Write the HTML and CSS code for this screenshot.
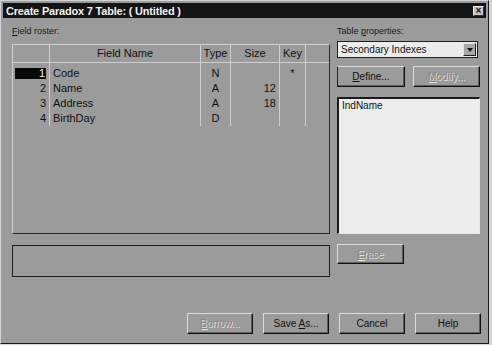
FILE: index.html
```html
<!DOCTYPE html>
<html>

<head>
<link rel="stylesheet" href="styles.css">
</head>

<body>
  <div class="dialog">
    <div class="titlebar">
      <span class="title">Create Paradox 7 Table: ( Untitled )</span>
      <span class="closebox">&#215;</span>
    </div>

    <div class="client">
      <div class="leftside">
        <div class="label"><u>F</u>ield roster:</div>
        <div class="roster">
          <div class="rosterrow head">
            <div class="cell num"></div>
            <div class="cell name center">Field Name</div>
            <div class="cell type">Type</div>
            <div class="cell size center">Size</div>
            <div class="cell key">Key</div>
            <div class="cell rest"></div>
          </div>
          <div class="rosterrow first">
            <div class="cell num"><span class="current">1</span></div>
            <div class="cell name">Code</div>
            <div class="cell type">N</div>
            <div class="cell size"></div>
            <div class="cell key">*</div>
            <div class="cell rest"></div>
          </div>
          <div class="rosterrow">
            <div class="cell num">2</div>
            <div class="cell name">Name</div>
            <div class="cell type">A</div>
            <div class="cell size">12</div>
            <div class="cell key"></div>
            <div class="cell rest"></div>
          </div>
          <div class="rosterrow">
            <div class="cell num">3</div>
            <div class="cell name">Address</div>
            <div class="cell type">A</div>
            <div class="cell size">18</div>
            <div class="cell key"></div>
            <div class="cell rest"></div>
          </div>
          <div class="rosterrow">
            <div class="cell num">4</div>
            <div class="cell name">BirthDay</div>
            <div class="cell type">D</div>
            <div class="cell size"></div>
            <div class="cell key"></div>
            <div class="cell rest"></div>
          </div>
        </div>
        <div class="messagebox"></div>
      </div>

      <div class="rightside">
        <div class="label">Table <u>p</u>roperties:</div>
        <div class="combo">
          <span class="combotext">Secondary Indexes</span>
          <span class="dropbutton"><span class="arrow"></span></span>
        </div>
        <div class="buttonrow">
          <span class="btn define"><span><u>D</u>efine...</span></span>
          <span class="btn modify disabled"><span><u>M</u>odify...</span></span>
        </div>
        <div class="indexlist">
          <div class="listitem">IndName</div>
        </div>
        <span class="btn erase disabled"><span><u>E</u>rase</span></span>
      </div>
    </div>

    <div class="footer">
      <span class="btn disabled"><span><u>B</u>orrow...</span></span>
      <span class="btn"><span>Save <u>A</u>s...</span></span>
      <span class="btn"><span>Cancel</span></span>
      <span class="btn"><span>Help</span></span>
    </div>
  </div>
</body>
</html>
```

FILE: styles.css
```css
/* whole page: the paper behind the dialog */
body {
  margin: 0;
  background: #d6d6d6;
  font-family: "Liberation Sans", Arial, sans-serif;
  color: #111;
}

* {
  box-sizing: border-box;
}

/* the dialog window with its 3d frame */
.dialog {
  width: 489px;
  height: 344px;
  background: #9b9b9b;
  border: 1px solid #1a1a1a;
  border-top-color: #d4d4d4;
  border-left-color: #d4d4d4;
  padding: 2px;
  display: flex;
  flex-direction: column;
}

/* title bar */
.titlebar {
  height: 15px;
  background: #141414;
  display: flex;
  align-items: center;
  justify-content: space-between;
  padding: 0 2px 0 3px;
}

.title {
  color: #f2f2f2;
  font-weight: bold;
  font-size: 11px;
  letter-spacing: -0.2px;
}

.closebox {
  width: 11px;
  height: 10px;
  background: #c4c4c4;
  border: 1px solid #333;
  border-top-color: #eee;
  border-left-color: #eee;
  color: #111;
  font-size: 10px;
  font-weight: bold;
  line-height: 7px;
  text-align: center;
}

/* two columns under the title */
.client {
  display: flex;
  gap: 7px;
  padding-left: 9px;
}

.leftside {
  width: 318px;
  display: flex;
  flex-direction: column;
}

.rightside {
  width: 143px;
  display: flex;
  flex-direction: column;
}

.label {
  font-size: 9px;
  line-height: 12px;
  margin: 7px 0;
  color: #1a1a1a;
}

.rightside .label {
  margin-bottom: 4px;
}

/* field roster grid */
.roster {
  height: 190px;
  border: 1px solid #2a2a2a;
  border-top-color: #cfcfcf;
  border-left-color: #cfcfcf;
  font-size: 11px;
}

.rosterrow {
  display: flex;
  height: 15px;
  line-height: 15px;
}

.rosterrow.head {
  height: 18px;
  line-height: 17px;
  border-bottom: 1px solid #cfcfcf;
}

.rosterrow.first {
  height: 18px;
}

.rosterrow.first .cell {
  padding-top: 3px;
}

.cell {
  border-right: 1px solid #cfcfcf;
  white-space: nowrap;
}

.num {
  width: 37px;
  text-align: right;
  padding-right: 3px;
}

.name {
  width: 151px;
  padding-left: 3px;
}

.type {
  width: 30px;
  text-align: center;
}

.size {
  width: 49px;
  text-align: right;
  padding-right: 3px;
}

.key {
  width: 26px;
  text-align: center;
}

.rest {
  flex: 1;
  border-right: none;
}

.head .center {
  text-align: center;
  padding: 0;
}

.current {
  display: block;
  margin-left: 2px;
  margin-top: 2px;
  height: 11px;
  line-height: 11px;
  background: #080808;
  color: #f4f4f4;
  padding-right: 1px;
}

.messagebox {
  margin-top: 11px;
  height: 32px;
  border: 1px solid #1e1e1e;
}

/* table properties side */
.combo {
  width: 141px;
  height: 17px;
  background: #ececec;
  border: 1px solid #1e1e1e;
  display: flex;
  align-items: center;
  justify-content: space-between;
  padding: 0 1px 0 3px;
  font-size: 10px;
}

.dropbutton {
  width: 13px;
  height: 13px;
  background: #a8a8a8;
  border: 1px solid #222;
  border-top-color: #e4e4e4;
  border-left-color: #e4e4e4;
  display: flex;
  align-items: center;
  justify-content: center;
}

.arrow {
  border-left: 3px solid transparent;
  border-right: 3px solid transparent;
  border-top: 4px solid #111;
}

.buttonrow {
  display: flex;
  justify-content: space-between;
  margin-top: 8px;
}

.btn {
  display: flex;
  align-items: center;
  justify-content: center;
  width: 66px;
  height: 21px;
  font-size: 10px;
  color: #111;
  border: 1px solid #111;
  border-top-color: #dcdcdc;
  border-left-color: #dcdcdc;
  box-shadow: inset -1px -1px 0 #5e5e5e;
}

.define {
  width: 68px;
  border-left-color: #222;
}

.modify {
  width: 67px;
}

.disabled {
  color: #868686;
  text-shadow: 1px 1px 0 #e2e2e2;
}

.indexlist {
  margin-top: 10px;
  height: 137px;
  background: #ededed;
  border: 1px solid #e8e8e8;
  border-top: 2px solid #1a1a1a;
  border-left: 2px solid #1a1a1a;
  padding: 1px 3px;
  font-size: 10px;
}

.listitem {
  line-height: 12px;
}

.erase {
  margin-top: 10px;
  width: 67px;
  height: 20px;
}

/* bottom row of buttons */
.footer {
  display: flex;
  justify-content: flex-end;
  gap: 10px;
  margin-top: 36px;
  padding-right: 5px;
}
```
